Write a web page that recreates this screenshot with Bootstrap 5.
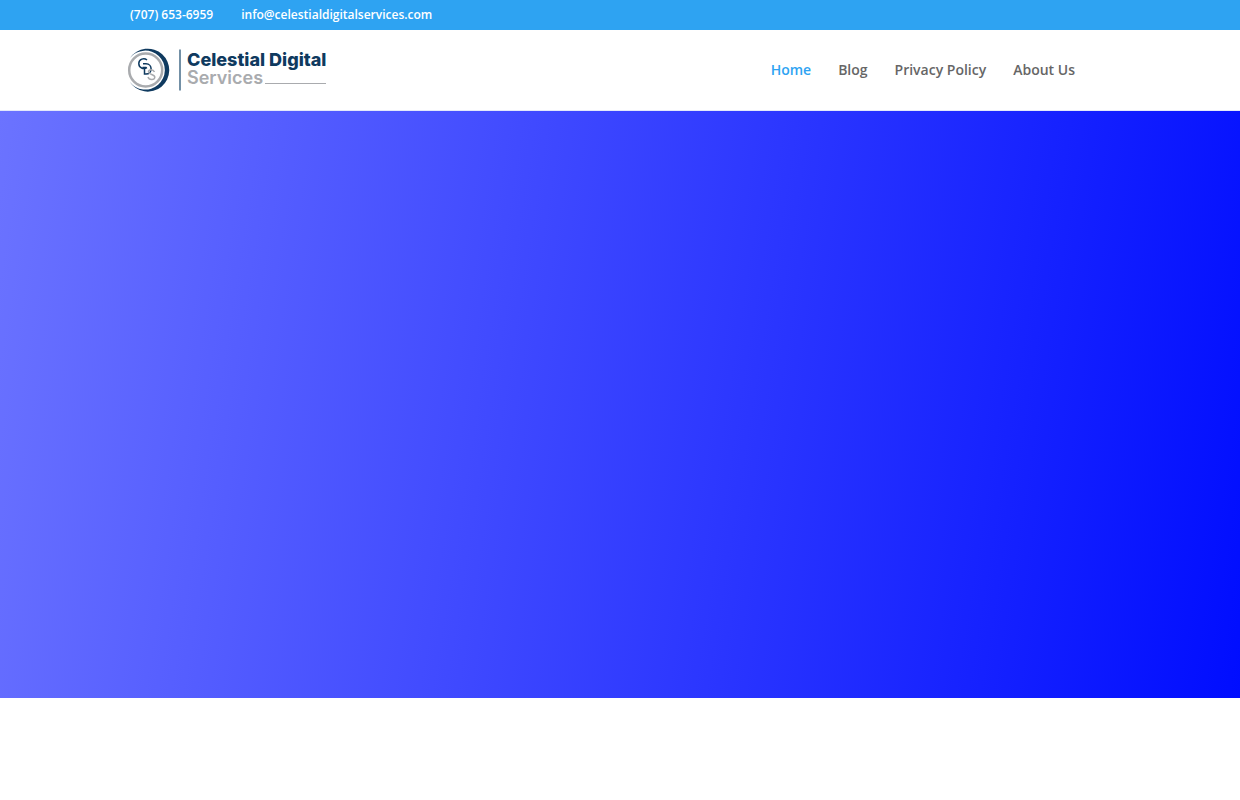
<!DOCTYPE html>
<html lang="en">
<head>
<meta charset="utf-8">
<meta name="viewport" content="width=device-width, initial-scale=1">
<title>Celestial Digital Services</title>
<link href="https://cdn.jsdelivr.net/npm/bootstrap@5.3.0/dist/css/bootstrap.min.css" rel="stylesheet">
<style>
body { font-family: "Open Sans", sans-serif; color: #666; }
.site-wrap { width: 80%; }
.top-bar { background: #2ea3f2; font-size: 12px; line-height: 30px; font-weight: 600; }
.top-info { padding-left: 6px; column-gap: 28px; }
.main-header { border-bottom: 1px solid #e3e8fa; }
.header-row { min-height: 80px; padding-left: 2px; }
.brand-mark { width: 56px; height: 48px; }
.brand-name { font-family: Inter, sans-serif; font-size: 18px; line-height: 18px; font-weight: 800; color: #0f3a5f; padding: 0 0 2px 5px; }
.brand-sub { font-weight: 600; color: #a9abae; }
.brand-rule { height: 1px; background: #a9abae; margin: 0 0 3px 2px; }
.main-menu { font-size: 14px; line-height: 20px; font-weight: 600; column-gap: 27px; margin-right: 41px; }
.main-menu .nav-link { color: #666; }
.main-menu .nav-link.active { color: #2ea3f2; }
.hero { height: 587px; background: linear-gradient(99deg, #6b73ff 0%, #000dff 100%); }
</style>
</head>
<body class="bg-white">
<div class="top-bar">
  <div class="site-wrap mx-auto">
    <div class="top-info d-flex flex-wrap">
      <span class="text-white">(707) 653-6959</span>
      <a class="text-white text-decoration-none" href="mailto:info@celestialdigitalservices.com">info@celestialdigitalservices.com</a>
    </div>
  </div>
</div>
<header class="main-header bg-white">
  <div class="site-wrap header-row mx-auto d-flex align-items-center justify-content-between">
    <a class="d-flex align-items-center text-decoration-none" href="#" aria-label="Celestial Digital Services">
      <svg class="brand-mark flex-shrink-0" viewBox="0 0 56 48" fill="none">
        <path d="M4 12A21.500 21.500 0 1 1 3.500 35.500A19.500 19.500 0 1 0 4 12Z" fill="#0f3a5f"/>
        <circle cx="19.700" cy="24" r="16.500" stroke="#a9abae" stroke-width="2.500"/>
        <path d="M21 14C18 11.500 12.800 13 12.800 17.500C12.800 22 17.500 23.500 21 21.500" stroke="#0f3a5f" stroke-width="1.500"/>
        <path d="M17 17.800H20C26.800 17.800 26.800 28 20 28H18.500V22.500M16.500 21.500H20" stroke="#0f3a5f" stroke-width="1.500"/>
        <path d="M28.500 26C27 22.800 22.300 23.200 22.500 26C22.800 29 29 28 28.800 31.200C28.500 34.500 23 34.200 22 31" stroke="#a9abae" stroke-width="1.500"/>
        <path d="M54 3.500V44.500" stroke="#456b88" stroke-width="1.500"/>
      </svg>
      <span class="brand-name">
        <span class="d-block">Celestial Digital</span>
        <span class="brand-sub d-flex align-items-end">Services<span class="brand-rule flex-grow-1"></span></span>
      </span>
    </a>
    <nav class="main-menu nav" aria-label="Main">
      <a class="nav-link active p-0" aria-current="page" href="#">Home</a>
      <a class="nav-link p-0" href="#">Blog</a>
      <a class="nav-link p-0" href="#">Privacy Policy</a>
      <a class="nav-link p-0" href="#">About Us</a>
    </nav>
  </div>
</header>
<main>
  <section class="hero"></section>
</main>
<script src="https://cdn.jsdelivr.net/npm/bootstrap@5.3.0/dist/js/bootstrap.bundle.min.js"></script>
</body>
</html>
